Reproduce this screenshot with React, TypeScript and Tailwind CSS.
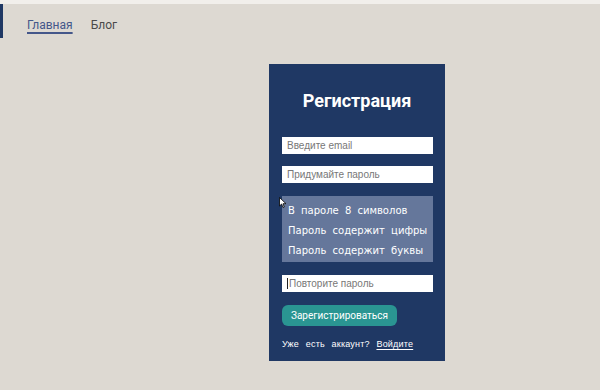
import React from "react";

export default function App() {
  return (
    <div className="relative min-h-[390px] w-[600px] bg-[#ddd9d2] font-['Roboto',sans-serif]">
      <div className="h-[4px] bg-[#f1efeb]" />
      <header className="flex h-[34px]">
        <div className="w-[3px] bg-[#1f3864]" />
        <nav className="ml-[24px] flex items-center gap-[18px] pt-[8px] text-[12px]">
          <a className="text-[#44578a] underline decoration-[#44578a] decoration-2 underline-offset-[3px]">Главная</a>
          <a className="text-[#4a4a4a]">Блог</a>
        </nav>
      </header>
      <main className="pl-[269px] pt-[26px]">
        <div className="flex h-[297px] w-[176px] flex-col bg-[#1f3864] px-[13px] pt-[27px]">
          <h1 className="text-center text-[18px] font-bold leading-[20px] text-white">Регистрация</h1>
          <input
            className="mt-[26px] block h-[17px] w-[151px] bg-white px-[5px] font-['Liberation_Sans',sans-serif] text-[10px] leading-[17px] text-[#333] outline-none placeholder:text-[#777]"
            placeholder="Введите email"
          />
          <input
            className="mt-[12px] block h-[17px] w-[151px] bg-white px-[5px] font-['Liberation_Sans',sans-serif] text-[10px] leading-[17px] text-[#333] outline-none placeholder:text-[#777]"
            placeholder="Придумайте пароль"
          />
          <div
            className="mt-[13px] flex h-[66px] w-[151px] flex-col justify-center whitespace-nowrap bg-[#65779b] px-[6px] pt-[3px] font-['DejaVu_Sans',sans-serif] text-[10px] leading-[20px] text-white [word-spacing:3px]"
          >
            <span>В пароле 8 символов</span>
            <span>Пароль содержит цифры</span>
            <span>Пароль содержит буквы</span>
          </div>
          <div className="mt-[13px] flex h-[17px] w-[151px] items-center bg-white px-[5px] font-['Liberation_Sans',sans-serif] text-[10px] text-[#777]">
            <span className="mr-[1px] h-[11px] w-[1px] bg-[#222]" />
            Повторите пароль
          </div>
          <button className="mt-[13px] h-[21px] w-[115px] rounded-[6px] bg-[#2a9592] text-[10px] leading-[21px] text-white">
            Зарегистрироваться
          </button>
          <p className="mt-[12px] whitespace-nowrap font-['Liberation_Sans',sans-serif] text-[9px] leading-[12px] tracking-[0.2px] text-white [word-spacing:4px]">
            Уже есть аккаунт? <a className="underline underline-offset-2">Войдите</a>
          </p>
        </div>
      </main>
      <svg className="absolute left-[279px] top-[197px]" width="8" height="12" viewBox="0 0 8 12">
        <path d="M0.5 0.5 L0.5 9 L2.6 7 L4 10.5 L5.3 10 L4 6.7 L7 6.7 Z" fill="white" stroke="black" strokeWidth="0.8" />
      </svg>
    </div>
  );
}
